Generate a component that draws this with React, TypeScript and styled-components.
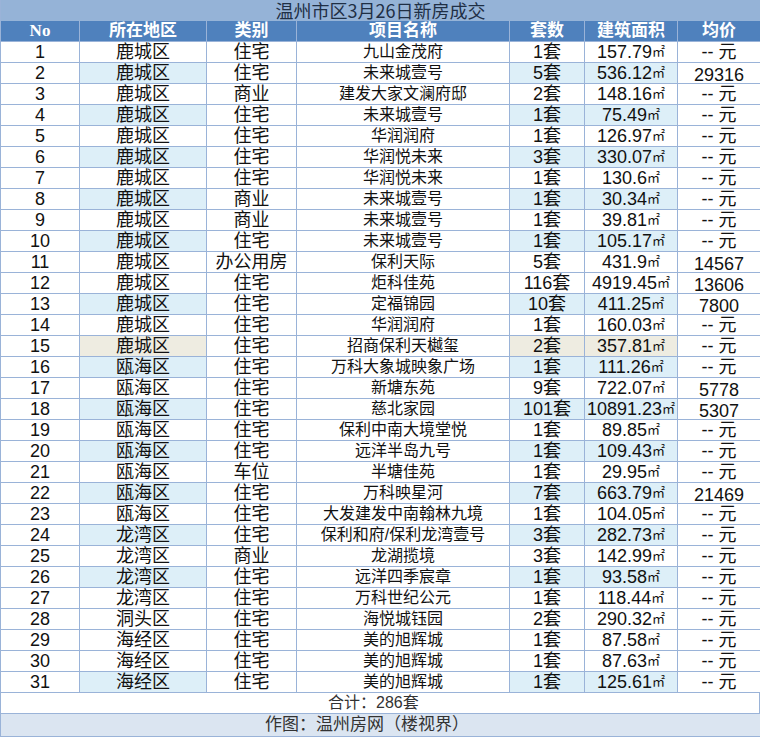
import styled, { createGlobalStyle } from 'styled-components'

const GlobalStyle = createGlobalStyle`
  body { margin: 0; background: #fff; font-family: "Liberation Sans", "Noto Sans CJK SC", sans-serif; }
`

const cols = '79px 127px 90px 213px 75px 93px 83px'

const Sheet = styled.div`
  width: 760px;
  height: 737px;
  display: flex;
  flex-direction: column;
  border-left: 1px solid #9ab3d8;
  box-sizing: border-box;
`

const Title = styled.div`
  height: 21px;
  background: #95b3d7;
  color: #1f2f45;
  font-size: 18px;
  line-height: 21px;
  text-align: center;
  font-family: "Noto Sans CJK SC", serif;
`

const Grid = styled.div<{ $head?: boolean }>`
  display: grid;
  grid-template-columns: ${cols};
  height: 21px;
  background: ${(p) => (p.$head ? '#4f81bd' : '#fff')};
  border-bottom: 1px solid #9ab3d8;
  box-sizing: border-box;
`

const HeadCell = styled.div`
  color: #fff;
  font-weight: bold;
  font-size: 17px;
  line-height: 20px;
  text-align: center;
  border-right: 1px solid #9ab3d8;
  font-family: "Liberation Serif", "Noto Sans CJK SC", serif;
`

const Cell = styled.div<{ $bg?: string; $small?: boolean; $price?: boolean }>`
  background: ${(p) => p.$bg ?? 'transparent'};
  font-size: ${(p) => (p.$small ? '16px' : '18px')};
  line-height: ${(p) => (p.$price ? '24px' : '20px')};
  height: 20px;
  text-align: center;
  color: #111;
  white-space: nowrap;
  border-right: 1px solid #9ab3d8;
`

const Sup = styled.span`
  font-size: 13px;
  vertical-align: 2px;
`

const Total = styled.div`
  height: 20px;
  line-height: 20px;
  padding-left: 327px;
  font-size: 16px;
  color: #333;
  border-right: 1px solid #9ab3d8;
`

const Footer = styled.div`
  height: 23px;
  background: #dbe5f1;
  border-top: 1px solid #9ab3d8;
  border-bottom: 1px solid #9ab3d8;
  line-height: 22px;
  padding-left: 264px;
  font-size: 17px;
  color: #333;
`

const rows: [string, string, string, string, string, string][] = [
  ['鹿城区', '住宅', '九山金茂府', '1套', '157.79', ''],
  ['鹿城区', '住宅', '未来城壹号', '5套', '536.12', '29316'],
  ['鹿城区', '商业', '建发大家文澜府邸', '2套', '148.16', ''],
  ['鹿城区', '住宅', '未来城壹号', '1套', '75.49', ''],
  ['鹿城区', '住宅', '华润润府', '1套', '126.97', ''],
  ['鹿城区', '住宅', '华润悦未来', '3套', '330.07', ''],
  ['鹿城区', '住宅', '华润悦未来', '1套', '130.6', ''],
  ['鹿城区', '商业', '未来城壹号', '1套', '30.34', ''],
  ['鹿城区', '商业', '未来城壹号', '1套', '39.81', ''],
  ['鹿城区', '住宅', '未来城壹号', '1套', '105.17', ''],
  ['鹿城区', '办公用房', '保利天际', '5套', '431.9', '14567'],
  ['鹿城区', '住宅', '炬科佳苑', '116套', '4919.45', '13606'],
  ['鹿城区', '住宅', '定福锦园', '10套', '411.25', '7800'],
  ['鹿城区', '住宅', '华润润府', '1套', '160.03', ''],
  ['鹿城区', '住宅', '招商保利天樾玺', '2套', '357.81', ''],
  ['瓯海区', '住宅', '万科大象城映象广场', '1套', '111.26', ''],
  ['瓯海区', '住宅', '新塘东苑', '9套', '722.07', '5778'],
  ['瓯海区', '住宅', '慈北家园', '101套', '10891.23', '5307'],
  ['瓯海区', '住宅', '保利中南大境堂悦', '1套', '89.85', ''],
  ['瓯海区', '住宅', '远洋半岛九号', '1套', '109.43', ''],
  ['瓯海区', '车位', '半塘佳苑', '1套', '29.95', ''],
  ['瓯海区', '住宅', '万科映星河', '7套', '663.79', '21469'],
  ['瓯海区', '住宅', '大发建发中南翰林九境', '1套', '104.05', ''],
  ['龙湾区', '住宅', '保利和府/保利龙湾壹号', '3套', '282.73', ''],
  ['龙湾区', '商业', '龙湖揽境', '3套', '142.99', ''],
  ['龙湾区', '住宅', '远洋四季宸章', '1套', '93.58', ''],
  ['龙湾区', '住宅', '万科世纪公元', '1套', '118.44', ''],
  ['洞头区', '住宅', '海悦城钰园', '2套', '290.32', ''],
  ['海经区', '住宅', '美的旭辉城', '1套', '87.58', ''],
  ['海经区', '住宅', '美的旭辉城', '1套', '87.63', ''],
  ['海经区', '住宅', '美的旭辉城', '1套', '125.61', ''],
]

const shaded = new Set([2, 4, 6, 8, 10, 13, 16, 18, 20, 22, 24, 26, 31])

export default function App() {
  return (
    <Sheet>
      <GlobalStyle />
      <Title>温州市区3月26日新房成交</Title>
      <Grid $head>
        {['No', '所在地区', '类别', '项目名称', '套数', '建筑面积', '均价'].map((h) => (
          <HeadCell key={h}>{h}</HeadCell>
        ))}
      </Grid>
      {rows.map((r, i) => {
        const n = i + 1
        const bg = n === 15 ? '#eeece1' : shaded.has(n) ? '#ddeff8' : undefined
        return (
          <Grid key={n}>
            <Cell>{n}</Cell>
            <Cell $bg={bg}>{r[0]}</Cell>
            <Cell>{r[1]}</Cell>
            <Cell $small>{r[2]}</Cell>
            <Cell $bg={bg}>{r[3]}</Cell>
            <Cell $bg={bg}>
              {r[4]}
              <Sup>㎡</Sup>
            </Cell>
            <Cell $price={!!r[5]}>{r[5] || '-- 元'}</Cell>
          </Grid>
        )
      })}
      <Total>合计：286套</Total>
      <Footer>作图：温州房网（楼视界）</Footer>
    </Sheet>
  )
}
